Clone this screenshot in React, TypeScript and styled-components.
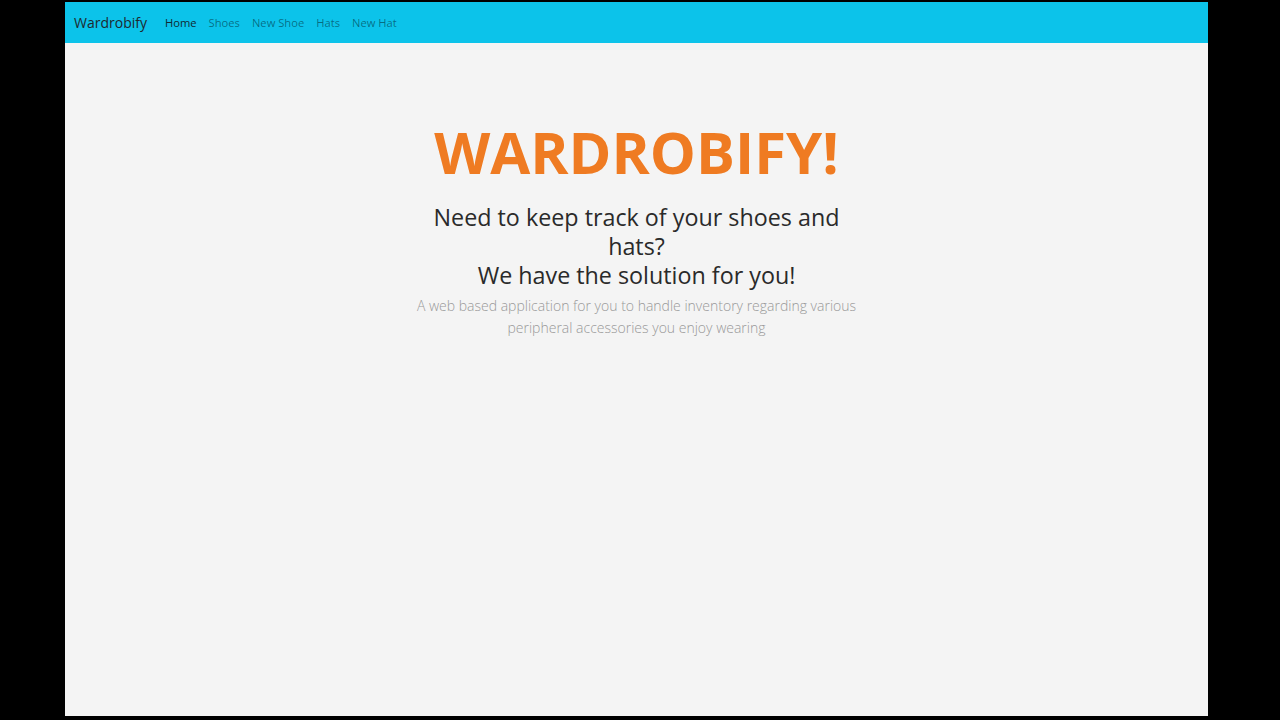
import React from "react";
import styled, { createGlobalStyle } from "styled-components";

const Global = createGlobalStyle`
  html, body { margin: 0; padding: 0; background: #000; }
  body { font-family: "Open Sans", "Noto Sans", sans-serif; }
`;

const Stage = styled.div`
  width: 1280px;
  height: 720px;
  display: flex;
  justify-content: flex-start;
  align-items: flex-start;
  padding: 2px 0 0 65px;
  box-sizing: border-box;
`;

const Frame = styled.div`
  width: 1143px;
  height: 714px;
  background: #f4f4f4;
  display: flex;
  flex-direction: column;
`;

const Nav = styled.nav`
  height: 41px;
  background: #0cc3ea;
  display: flex;
  align-items: center;
  padding: 0 9px;
  gap: 12px;
`;

const Brand = styled.span`
  font-size: 14px;
  color: #1e2a30;
`;

const Links = styled.div`
  display: flex;
`;

const NavLink = styled.span<{ $active?: boolean }>`
  font-size: 11.2px;
  padding: 0 6px;
  color: ${(p) => (p.$active ? "#102a33" : "rgba(0,0,0,0.45)")};
`;

const Hero = styled.main`
  display: flex;
  flex-direction: column;
  align-items: center;
  padding-top: 69px;
  text-align: center;
`;

const Title = styled.h1`
  margin: 0;
  font-size: 58px;
  font-weight: 700;
  color: #ef7b22;
  line-height: 80px;
`;

const Column = styled.div`
  width: 440px;
  margin-top: 11px;
`;

const Lead = styled.h2`
  margin: 0;
  font-size: 23.3px;
  font-weight: 500;
  line-height: 29px;
  color: #2a2a2a;
`;

const Sub = styled.p`
  margin: 5px 0 0;
  font-size: 14px;
  font-weight: 300;
  line-height: 22px;
  color: #999999;
`;

export default function App() {
  return (
    <>
      <Global />
      <Stage>
        <Frame>
          <Nav>
            <Brand>Wardrobify</Brand>
            <Links>
              <NavLink $active>Home</NavLink>
              <NavLink>Shoes</NavLink>
              <NavLink>New Shoe</NavLink>
              <NavLink>Hats</NavLink>
              <NavLink>New Hat</NavLink>
            </Links>
          </Nav>
          <Hero>
            <Title>WARDROBIFY!</Title>
            <Column>
              <Lead>
                Need to keep track of your shoes and hats?
                <br />
                We have the solution for you!
              </Lead>
              <Sub>
                A web based application for you to handle inventory regarding various peripheral accessories you enjoy wearing
              </Sub>
            </Column>
          </Hero>
        </Frame>
      </Stage>
    </>
  );
}
